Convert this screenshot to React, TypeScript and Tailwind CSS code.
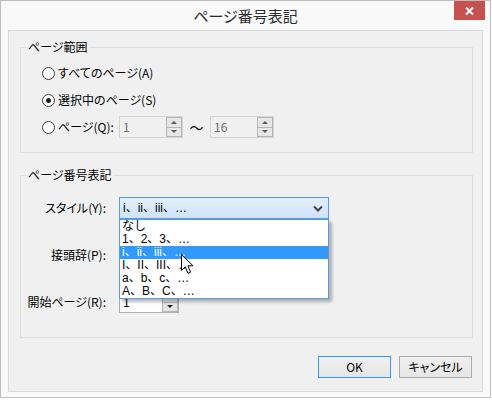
import React from 'react';

const FONT = "font-['Noto_Sans_CJK_JP','Noto_Sans_CJK_SC',sans-serif] [font-feature-settings:'palt']";
const LIST_FONT = "font-['Liberation_Sans','Noto_Sans_CJK_JP',sans-serif] [font-feature-settings:normal]";

const Radio = ({ checked, label }: { checked?: boolean; label: string }) => (
    <label className="flex items-center gap-[3px]">
        <span className="w-[13px] h-[13px] rounded-full border border-[#3c3c3c] bg-white flex items-center justify-center">
            {checked && <span className="w-[5px] h-[5px] rounded-full bg-[#1e1e1e]" />}
        </span>
        <span>{label}</span>
    </label>
);

const Arrow = ({ up, disabled }: { up?: boolean; disabled?: boolean }) => (
    <span
        className={
            up
                ? `w-0 h-0 border-x-[3px] border-x-transparent border-b-[3px] ${disabled ? 'border-b-[#5a5a5a]' : 'border-b-[#222]'}`
                : `w-0 h-0 border-x-[3px] border-x-transparent border-t-[3px] ${disabled ? 'border-t-[#5a5a5a]' : 'border-t-[#222]'}`
        }
    />
);

const Spin = ({ value, className, disabled }: { value: string; className: string; disabled?: boolean }) => (
    <div
        className={`flex h-[22px] border ${className} ${
            disabled ? 'border-[#d3d3d3] bg-[#f0f0f0] text-[#6d6d6d]' : 'border-[#abadb3] bg-white text-black'
        }`}
    >
        <span className="flex-1 pl-[3px] self-center leading-[16px]">{value}</span>
        <div className="w-[16px] flex flex-col">
            <span className="flex-1 border border-[#b5b5b5] bg-[#e6e6e6] flex items-center justify-center">
                <Arrow up disabled={disabled} />
            </span>
            <span className="flex-1 border border-t-0 border-[#b5b5b5] bg-[#e6e6e6] flex items-center justify-center">
                <Arrow disabled={disabled} />
            </span>
        </div>
    </div>
);

const ITEMS = ['なし', '1、2、3、…', 'i、ii、iii、…', 'I、II、III、…', 'a、b、c、…', 'A、B、C、…'];

export default function App() {
    return (
        <div className={`w-[492px] h-[400px] bg-white text-[12px] leading-[16px] text-black ${FONT}`}>
            <div className="w-[491px] h-[398px] border border-[#bdbdbd] bg-[#f9f9f9] flex flex-col">
                {/* title bar */}
                <div className="h-[29px] grid grid-cols-[1fr_auto_1fr]">
                    <div />
                    <div className="self-center text-[15px] leading-[20px] text-[#2b2b2b]">ページ番号表記</div>
                    <div className="flex justify-end items-start pr-[5px]">
                        <button className="w-[31px] h-[19px] bg-[#c75050] flex items-center justify-center">
                            <svg width="9" height="8" viewBox="0 0 9 8">
                                <path d="M1 0.5 L8 7.5 M8 0.5 L1 7.5" stroke="white" strokeWidth="2" />
                            </svg>
                        </button>
                    </div>
                </div>

                {/* client area */}
                <div className="mx-[7px] h-[362px] border border-[#d9d9d9] bg-[#f0f0f0] flex flex-col">
                    <fieldset className="mt-[8px] ml-[11px] mr-[9px] border border-[#dcdcdc]">
                        <legend className="ml-[6px] px-[1px] leading-[16px]">ページ範囲</legend>
                        <div className="pt-[7px] pl-[21px] pb-[14px] flex flex-col gap-[5px]">
                            <div className="h-[22px] flex items-center">
                                <Radio label="すべてのページ(A)" />
                            </div>
                            <div className="h-[22px] flex items-center">
                                <Radio checked label="選択中のページ(S)" />
                            </div>
                            <div className="h-[22px] flex items-center">
                                <div className="w-[77px]">
                                    <Radio label="ページ(Q):" />
                                </div>
                                <Spin value="1" className="w-[64px]" disabled />
                                <span className="w-[27px] text-center text-[14px]">〜</span>
                                <Spin value="16" className="w-[64px]" disabled />
                            </div>
                        </div>
                    </fieldset>

                    <fieldset className="mt-[14px] ml-[11px] mr-[9px] border border-[#dcdcdc]">
                        <legend className="ml-[6px] px-[1px] leading-[16px]">ページ番号表記</legend>
                        <div className="pt-[14px] pb-[24px] grid grid-cols-[85px_auto] gap-x-[13px] gap-y-[25px]">
                            <span className="self-center text-right">スタイル(Y):</span>
                            <div className="relative w-[210px] h-[22px]">
                                <div className="h-full border border-[#569de5] bg-gradient-to-b from-[#e4f0fc] to-[#cde3f9] flex items-center pl-[3px] pr-[5px]">
                                    <span className={`flex-1 leading-[16px] ${LIST_FONT}`}>i、ii、iii、…</span>
                                    <svg width="10" height="7" viewBox="0 0 10 7">
                                        <path d="M1 1.5 L5 5.5 L9 1.5" fill="none" stroke="#444" strokeWidth="2" />
                                    </svg>
                                </div>
                                <div className={`absolute left-0 top-full z-10 w-full border border-[#5a9be0] bg-white shadow-[3px_3px_3px_rgba(0,0,0,0.28)] flex flex-col ${LIST_FONT}`}>
                                    {ITEMS.map((item) => (
                                        <div
                                            key={item}
                                            className={`h-[13px] leading-[13px] pl-[2px] ${
                                                item === 'i、ii、iii、…' ? 'bg-[#3399ff] text-white' : 'text-black'
                                            }`}
                                        >
                                            {item}
                                        </div>
                                    ))}
                                    <svg className="absolute left-[61px] top-[34px]" width="13" height="21" viewBox="0 0 13 21">
                                        <path
                                            d="M0.5 0.5 L0.5 16.5 L4.3 12.8 L7 19.3 L9.6 18.2 L6.9 11.8 L12 11.8 Z"
                                            fill="white"
                                            stroke="black"
                                            strokeWidth="1"
                                            strokeLinejoin="round"
                                        />
                                    </svg>
                                </div>
                            </div>

                            <span className="self-center text-right">接頭辞(P):</span>
                            <div className="w-[210px] h-[22px] border border-[#abadb3] bg-white" />

                            <span className="self-center text-right">開始ページ(R):</span>
                            <Spin value="1" className="w-[60px]" />
                        </div>
                    </fieldset>

                    <div className="mt-[18px] pr-[10px] flex justify-end gap-[8px]">
                        <button className="w-[73px] h-[22px] border border-[#3399ff] bg-gradient-to-b from-[#f0f0f0] to-[#e5e5e5] leading-[16px]">
                            OK
                        </button>
                        <button className="w-[73px] h-[22px] border border-[#acacac] bg-gradient-to-b from-[#f0f0f0] to-[#e5e5e5] leading-[16px]">
                            キャンセル
                        </button>
                    </div>
                </div>
            </div>
        </div>
    );
}
